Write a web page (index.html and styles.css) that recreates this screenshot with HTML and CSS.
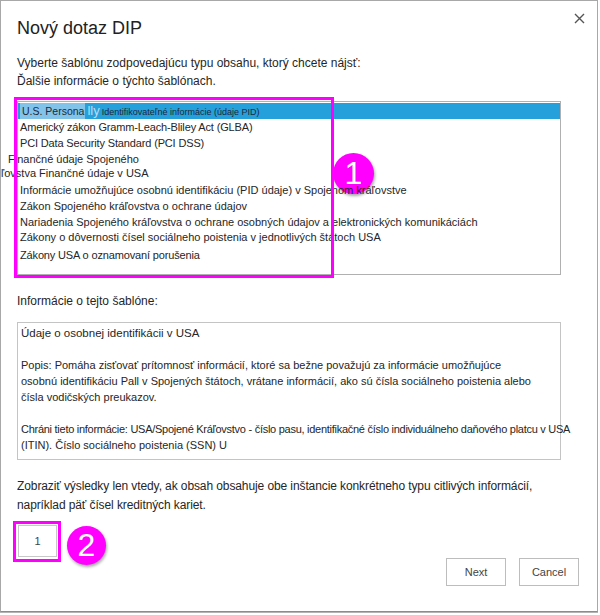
FILE: index.html
```html
<!DOCTYPE html>
<html lang="sk">
<head>
    <meta charset="UTF-8">
    <title>Nový dotaz DIP</title>
    <link rel="stylesheet" href="styles.css">
</head>
<body>
<div class="dialog">
    <div class="head">
        <h1 class="title">Nový dotaz DIP</h1>
        <button class="close" type="button">
            <svg width="11" height="11" viewBox="0 0 11 11"><path d="M1 1L10 10M10 1L1 10" stroke="#555" stroke-width="1.4" fill="none"/></svg>
        </button>
    </div>
    <div class="intro">
        <p>Vyberte šablónu zodpovedajúcu typu obsahu, ktorý chcete nájsť:</p>
        <p>Ďalšie informácie o týchto šablónach.</p>
    </div>
    <!--zoznam šablón-->
    <div class="pick">
        <div class="mark mark-list"></div>
        <div class="badge badge-1">1</div>
        <ul class="list">
            <li class="sel"><span class="sel-a">U.S. Persona</span><span class="sel-b">lly</span><span class="sel-c">Identifikovateľné informácie (údaje PID)</span></li>
            <li class="i2">Americký zákon Gramm-Leach-Bliley Act (GLBA)</li>
            <li class="i3">PCI Data Security Standard (PCI DSS)</li>
            <li class="i4">Finančné údaje Spojeného</li>
            <li class="i5">ľovstva Finančné údaje v USA</li>
            <li class="i6">Informácie umožňujúce osobnú identifikáciu (PID údaje) v Spojenom kráľovstve</li>
            <li class="i7">Zákon Spojeného kráľovstva o ochrane údajov</li>
            <li class="i8">Nariadenia Spojeného kráľovstva o ochrane osobných údajov a elektronických komunikáciách</li>
            <li class="i9">Zákony o dôvernosti čísel sociálneho poistenia v jednotlivých štátoch USA</li>
            <li class="i10">Zákony USA o oznamovaní porušenia</li>
        </ul>
    </div>
    <p class="label">Informácie o tejto šablóne:</p>
    <div class="info">
        <p class="t1">Údaje o osobnej identifikácii v USA</p>
        <p class="gap"></p>
        <p class="t2">Popis: Pomáha zisťovať prítomnosť informácií, ktoré sa bežne považujú za informácie umožňujúce</p>
        <p class="t3">osobnú identifikáciu Pall v Spojených štátoch, vrátane informácií, ako sú čísla sociálneho poistenia alebo</p>
        <p class="t4">čísla vodičských preukazov.</p>
        <p class="gap"></p>
        <p class="t5">Chráni tieto informácie: USA/Spojené Kráľovstvo - číslo pasu, identifikačné číslo individuálneho daňového platcu v USA</p>
        <p class="t6">(ITIN). Číslo sociálneho poistenia (SSN) U</p>
    </div>
    <div class="note">
        <p>Zobraziť výsledky len vtedy, ak obsah obsahuje obe inštancie konkrétneho typu citlivých informácií,</p>
        <p>napríklad päť čísel kreditných kariet.</p>
    </div>
    <div class="foot">
        <div class="count">
            <div class="mark mark-count"></div>
            <input type="text" value="1"/>
            <div class="badge badge-2">2</div>
        </div>
        <div class="btns">
            <button type="button">Next</button>
            <button type="button">Cancel</button>
        </div>
    </div>
</div>
</body>
</html>
```

FILE: styles.css
```css
*{
    margin: 0;
    padding: 0;
    box-sizing: border-box;
    list-style: none;
    font-family: "Liberation Sans", Arial, sans-serif;
}
html,body{
    width: 100%;
    height: 100%;
    background: #fff;
}
.dialog{
    width: 598px;
    height: 612px;
    border: 1px solid #a8a8a8;
    border-bottom-color: #8c8c8c;
    box-shadow: 0 1px 0 #b4b4b4;
    padding: 0 18px 0 16px;
    color: #262626;
}
.head{
    height: 40px;
    padding-top: 15px;
    display: flex;
    justify-content: space-between;
    align-items: flex-start;
}
.title{
    font-size: 18px;
    font-weight: normal;
    line-height: 24px;
    color: #222;
}
.close{
    border: none;
    background: none;
    margin: -4px -6px 0 0;
    width: 11px;
    height: 11px;
}
.intro{
    margin-top: 13px;
    font-size: 12px;
    line-height: 18px;
}
.pick{
    position: relative;
    margin-top: 11px;
    width: 544px;
}
.list{
    height: 174px;
    border: 1px solid #b0b0b0;
    background: #fff;
    padding-top: 1px;
}
.list li{
    position: relative;
    z-index: 2;
    height: 16px;
    line-height: 16px;
    font-size: 11px;
    white-space: nowrap;
    padding-left: 2px;
}
.list li.sel{
    background: #26a0da;
    color: #1b2a3a;
}
.sel-a{
    display: inline-block;
    background: #82c3ea;
    padding: 0 1px 0 2px;
    font-size: 10.5px;
}
.sel-b{
    font-size: 13px;
    color: #b6dcf3;
    margin-left: 2px;
}
.sel-c{
    font-size: 9px;
    margin-left: 2px;
}
.list .i2, .list .i3, .list .i10{
    letter-spacing: -0.15px;
}
.list .i4{
    margin-left: -12px;
}
.list .i5{
    margin-left: -19px;
    height: 15px;
    line-height: 13px;
}
.list .i9{
    height: 17px;
    line-height: 15px;
}
.mark{
    position: absolute;
    z-index: 3;
    border: 3px solid #f0f;
    pointer-events: none;
}
.mark-list{
    left: -3px;
    top: -4px;
    width: 320px;
    height: 181px;
}
.badge{
    position: absolute;
    z-index: 1;
    border-radius: 50%;
    background: #f0f;
    color: #fff;
    text-align: center;
    font-size: 32px;
    box-shadow: 1px 2px 3px rgba(0,0,0,.35);
}
.badge-1{
    left: 316px;
    top: 52px;
    width: 41px;
    height: 41px;
    line-height: 41px;
}
.label{
    margin-top: 17px;
    font-size: 12px;
    line-height: 18px;
}
.info{
    margin-top: 12px;
    width: 544px;
    height: 138px;
    border: 1px solid #c4c4c4;
    padding: 2px 0 0 3px;
    font-size: 11px;
    line-height: 16px;
}
.info p{
    height: 16px;
    white-space: nowrap;
}
.info .t1{
    font-size: 11.5px;
}
.info .t5{
    letter-spacing: -0.27px;
}
.note{
    margin-top: 17px;
    font-size: 12px;
    line-height: 19px;
    letter-spacing: -0.1px;
}
.foot{
    display: flex;
    justify-content: space-between;
    margin-top: 10px;
}
.count{
    position: relative;
    margin-left: 1px;
    width: 39px;
    height: 32px;
}
.count input{
    display: block;
    width: 39px;
    height: 32px;
    border: 1px solid #c8c8c8;
    text-align: center;
    font-size: 11px;
    color: #444;
    outline: none;
}
.mark-count{
    left: -5px;
    top: -4px;
    width: 48px;
    height: 41px;
}
.badge-2{
    left: 49px;
    top: 1px;
    width: 39px;
    height: 39px;
    line-height: 39px;
}
.btns{
    display: flex;
    gap: 13px;
    margin-top: 33px;
}
.btns button{
    width: 60px;
    height: 28px;
    border: 1px solid #bdbdbd;
    background: #fff;
    font-size: 11px;
    color: #444;
}
```
